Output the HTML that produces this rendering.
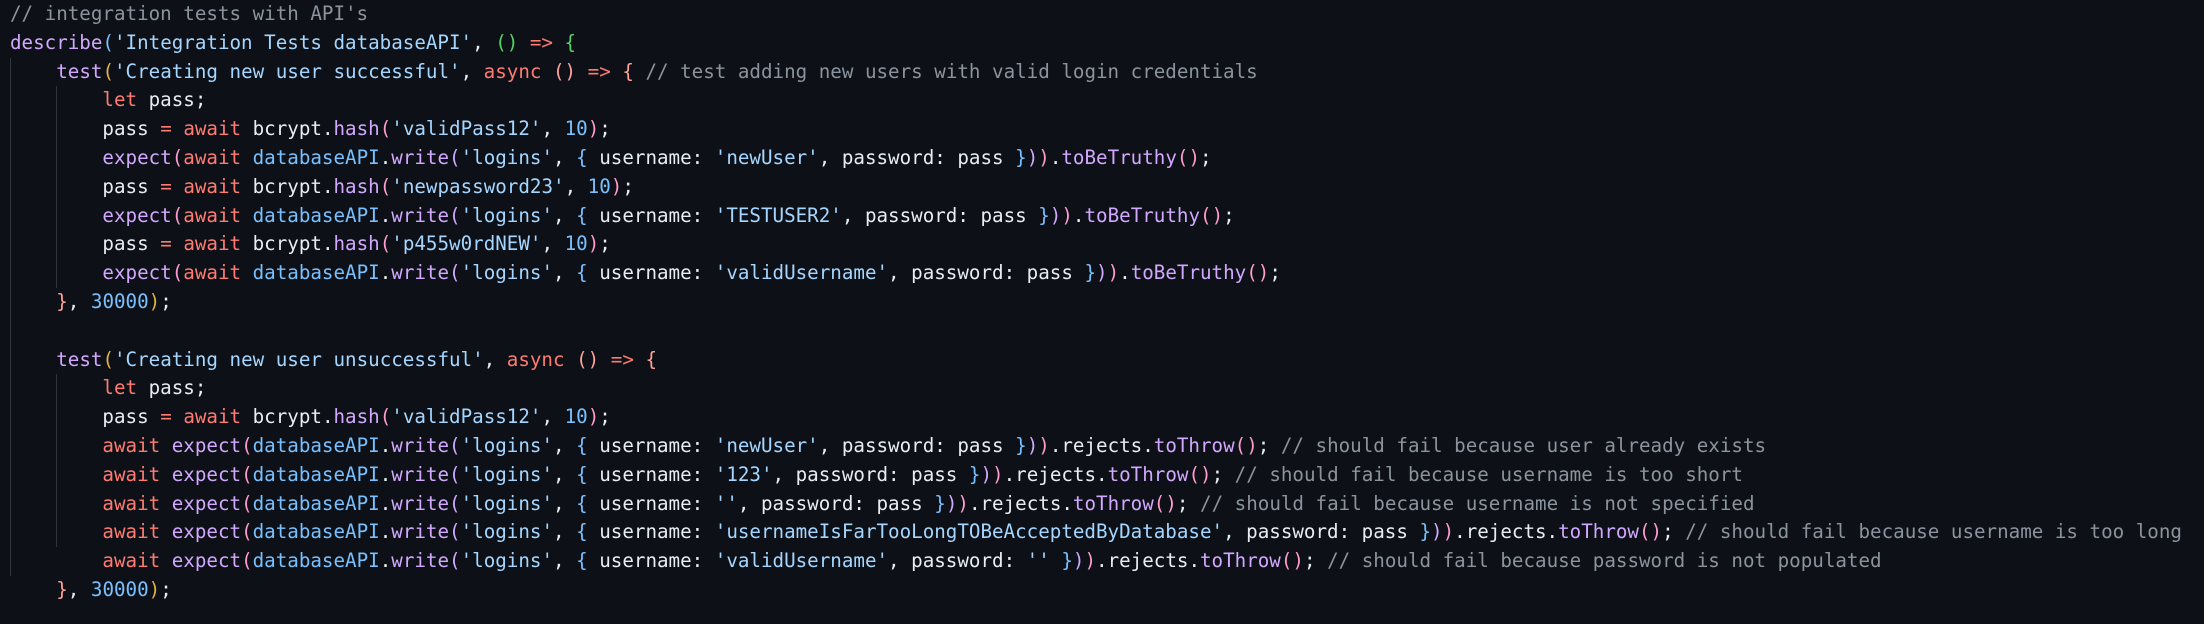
<!DOCTYPE html>
<html><head><meta charset="utf-8">
<style>
html,body{margin:0;padding:0;background:#0d1117;width:2204px;height:624px;overflow:hidden}
pre{margin:0;position:absolute;left:10px;top:0;font-family:"DejaVu Sans Mono","Liberation Mono",monospace;font-size:19.2px;line-height:28.8px;color:#e6edf3;white-space:pre}
.c{color:#8b949e}.k{color:#ff7b72}.s{color:#a5d6ff}.f{color:#d2a8ff}.n{color:#79c0ff}
.b1{color:#79c0ff}.b2{color:#56d364}.b3{color:#e3b341}.b4{color:#ffa198}.b5{color:#ff9bce}.b6{color:#d2a8ff}
.g{position:absolute;width:1px;background:#30363d}
</style></head><body>
<div class="g" style="left:10px;top:57.6px;height:518px"></div>
<div class="g" style="left:56px;top:86.4px;height:201.6px"></div>
<div class="g" style="left:56px;top:374.4px;height:172.8px"></div>
<pre><span class="c">// integration tests with API's</span>
<span class="f">describe</span><span class="b1">(</span><span class="s">'Integration Tests databaseAPI'</span>, <span class="b2">()</span> <span class="k">=&gt;</span> <span class="b2">{</span>
    <span class="f">test</span><span class="b3">(</span><span class="s">'Creating new user successful'</span>, <span class="k">async</span> <span class="b4">()</span> <span class="k">=&gt;</span> <span class="b4">{</span> <span class="c">// test adding new users with valid login credentials</span>
        <span class="k">let</span> pass;
        pass <span class="k">=</span> <span class="k">await</span> bcrypt.<span class="f">hash</span><span class="b5">(</span><span class="s">'validPass12'</span>, <span class="n">10</span><span class="b5">)</span>;
        <span class="f">expect</span><span class="b5">(</span><span class="k">await</span> <span class="n">databaseAPI</span>.<span class="f">write</span><span class="b6">(</span><span class="s">'logins'</span>, <span class="b1">{</span> username: <span class="s">'newUser'</span>, password: pass <span class="b1">}</span><span class="b6">)</span><span class="b5">)</span>.<span class="f">toBeTruthy</span><span class="b5">()</span>;
        pass <span class="k">=</span> <span class="k">await</span> bcrypt.<span class="f">hash</span><span class="b5">(</span><span class="s">'newpassword23'</span>, <span class="n">10</span><span class="b5">)</span>;
        <span class="f">expect</span><span class="b5">(</span><span class="k">await</span> <span class="n">databaseAPI</span>.<span class="f">write</span><span class="b6">(</span><span class="s">'logins'</span>, <span class="b1">{</span> username: <span class="s">'TESTUSER2'</span>, password: pass <span class="b1">}</span><span class="b6">)</span><span class="b5">)</span>.<span class="f">toBeTruthy</span><span class="b5">()</span>;
        pass <span class="k">=</span> <span class="k">await</span> bcrypt.<span class="f">hash</span><span class="b5">(</span><span class="s">'p455w0rdNEW'</span>, <span class="n">10</span><span class="b5">)</span>;
        <span class="f">expect</span><span class="b5">(</span><span class="k">await</span> <span class="n">databaseAPI</span>.<span class="f">write</span><span class="b6">(</span><span class="s">'logins'</span>, <span class="b1">{</span> username: <span class="s">'validUsername'</span>, password: pass <span class="b1">}</span><span class="b6">)</span><span class="b5">)</span>.<span class="f">toBeTruthy</span><span class="b5">()</span>;
    <span class="b4">}</span>, <span class="n">30000</span><span class="b3">)</span>;

    <span class="f">test</span><span class="b3">(</span><span class="s">'Creating new user unsuccessful'</span>, <span class="k">async</span> <span class="b4">()</span> <span class="k">=&gt;</span> <span class="b4">{</span>
        <span class="k">let</span> pass;
        pass <span class="k">=</span> <span class="k">await</span> bcrypt.<span class="f">hash</span><span class="b5">(</span><span class="s">'validPass12'</span>, <span class="n">10</span><span class="b5">)</span>;
        <span class="k">await</span> <span class="f">expect</span><span class="b5">(</span><span class="n">databaseAPI</span>.<span class="f">write</span><span class="b6">(</span><span class="s">'logins'</span>, <span class="b1">{</span> username: <span class="s">'newUser'</span>, password: pass <span class="b1">}</span><span class="b6">)</span><span class="b5">)</span>.rejects.<span class="f">toThrow</span><span class="b5">()</span>; <span class="c">// should fail because user already exists</span>
        <span class="k">await</span> <span class="f">expect</span><span class="b5">(</span><span class="n">databaseAPI</span>.<span class="f">write</span><span class="b6">(</span><span class="s">'logins'</span>, <span class="b1">{</span> username: <span class="s">'123'</span>, password: pass <span class="b1">}</span><span class="b6">)</span><span class="b5">)</span>.rejects.<span class="f">toThrow</span><span class="b5">()</span>; <span class="c">// should fail because username is too short</span>
        <span class="k">await</span> <span class="f">expect</span><span class="b5">(</span><span class="n">databaseAPI</span>.<span class="f">write</span><span class="b6">(</span><span class="s">'logins'</span>, <span class="b1">{</span> username: <span class="s">''</span>, password: pass <span class="b1">}</span><span class="b6">)</span><span class="b5">)</span>.rejects.<span class="f">toThrow</span><span class="b5">()</span>; <span class="c">// should fail because username is not specified</span>
        <span class="k">await</span> <span class="f">expect</span><span class="b5">(</span><span class="n">databaseAPI</span>.<span class="f">write</span><span class="b6">(</span><span class="s">'logins'</span>, <span class="b1">{</span> username: <span class="s">'usernameIsFarTooLongTOBeAcceptedByDatabase'</span>, password: pass <span class="b1">}</span><span class="b6">)</span><span class="b5">)</span>.rejects.<span class="f">toThrow</span><span class="b5">()</span>; <span class="c">// should fail because username is too long</span>
        <span class="k">await</span> <span class="f">expect</span><span class="b5">(</span><span class="n">databaseAPI</span>.<span class="f">write</span><span class="b6">(</span><span class="s">'logins'</span>, <span class="b1">{</span> username: <span class="s">'validUsername'</span>, password: <span class="s">''</span> <span class="b1">}</span><span class="b6">)</span><span class="b5">)</span>.rejects.<span class="f">toThrow</span><span class="b5">()</span>; <span class="c">// should fail because password is not populated</span>
    <span class="b4">}</span>, <span class="n">30000</span><span class="b3">)</span>;</pre>
</body></html>
